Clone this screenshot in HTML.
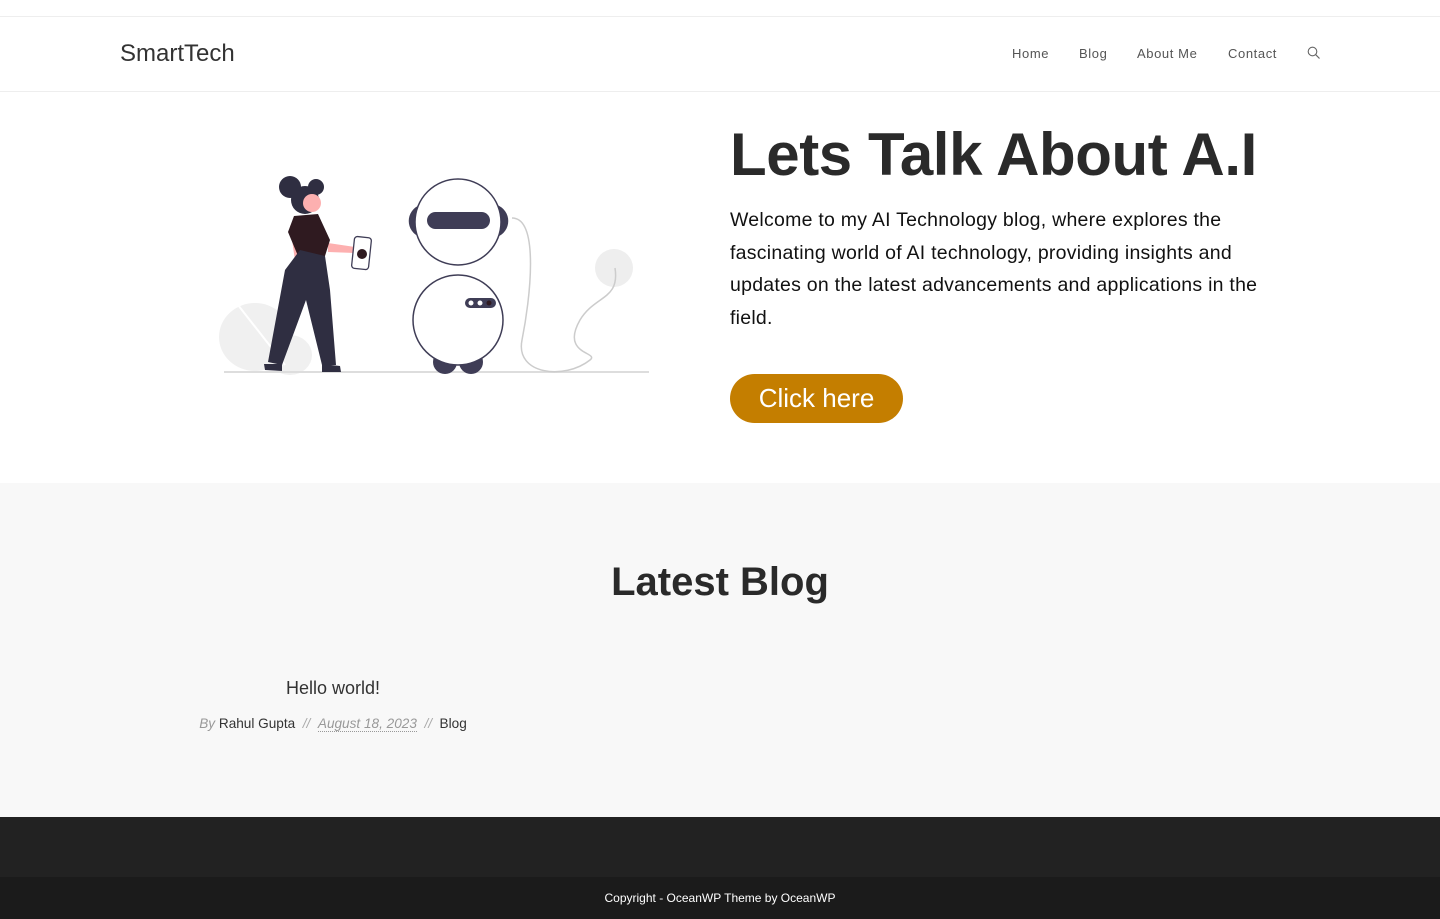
<!DOCTYPE html>
<html><head><meta charset="utf-8"><style>
*{margin:0;padding:0;box-sizing:border-box}
body{width:1440px;height:919px;overflow:hidden;background:#fff;font-family:"Liberation Sans",sans-serif;color:#333;position:relative}
.topbar{position:absolute;top:0;left:0;width:1440px;height:17px;border-bottom:1px solid #eee}
.hdr{position:absolute;top:17px;left:0;width:1440px;height:75px;border-bottom:1px solid #eee}
.logo{position:absolute;left:120px;top:23px;font-size:24px;color:#333}
.nav{position:absolute;top:29px;font-size:13px;letter-spacing:.6px;color:#555}
h1{position:absolute;left:730px;top:120px;font-size:60px;font-weight:bold;color:#2a2a2a;letter-spacing:-0.4px;white-space:nowrap}
.intro{position:absolute;left:730px;top:204px;white-space:nowrap;font-size:19.5px;letter-spacing:.25px;line-height:32.5px;color:#111}
.btn{position:absolute;left:730px;top:374px;width:173px;height:49px;border-radius:25px;background:#c47e00;color:#fff;font-size:26px;text-align:center;line-height:49px}
.sec{position:absolute;top:483px;left:0;width:1440px;height:334px;background:#f8f8f8}
h2{position:absolute;top:560px;left:0;width:1440px;text-align:center;font-size:40px;font-weight:bold;color:#2a2a2a}
.post{position:absolute;left:186px;width:294px;text-align:center}
.foot1{position:absolute;top:817px;left:0;width:1440px;height:60px;background:#222}
.foot2{position:absolute;top:877px;left:0;width:1440px;height:42px;background:#1b1b1b;color:#fff;font-size:12px;text-align:center;line-height:42px}
</style></head><body>
<div class="topbar"></div>
<div class="hdr">
<div class="logo">SmartTech</div>
<div class="nav" style="left:1012px">Home</div>
<div class="nav" style="left:1079px">Blog</div>
<div class="nav" style="left:1137px">About Me</div>
<div class="nav" style="left:1228px">Contact</div>
<svg style="position:absolute;left:1307px;top:29px" width="14" height="14" viewBox="0 0 14 14"><circle cx="5.5" cy="5.5" r="4.3" fill="none" stroke="#666" stroke-width="1.1"/><path d="M8.6 8.6L12.5 12.5" stroke="#666" stroke-width="1.2"/></svg>
</div>
<svg style="position:absolute;left:0;top:0" width="700" height="400" viewBox="0 0 700 400">
<ellipse cx="255" cy="337" rx="36" ry="34" fill="#f0f0f0"/>
<ellipse cx="290" cy="355" rx="22" ry="20" fill="#f0f0f0"/>
<path d="M238 305 L285 365" stroke="#fff" stroke-width="2"/>
<line x1="224" y1="372" x2="649" y2="372" stroke="#ddd" stroke-width="2"/>
<circle cx="614" cy="268" r="19" fill="#eee"/>
<path d="M512 218 C540 218 530 300 522 340 C515 375 565 380 590 360 C600 352 560 355 580 320 C595 295 620 300 615 268" fill="none" stroke="#ccc" stroke-width="1.5"/>
<path d="M420 205 A17 17 0 0 0 420 237Z M497 205 A17 17 0 0 1 497 237Z" fill="#3f3d56"/>
<circle cx="458" cy="222" r="43" fill="#fff" stroke="#3f3d56" stroke-width="1.5"/>
<rect x="427" y="212" width="63" height="17" rx="8.5" fill="#3f3d56"/>
<circle cx="445" cy="362" r="12" fill="#3f3d56"/><circle cx="471" cy="362" r="12" fill="#3f3d56"/>
<circle cx="458" cy="320" r="45" fill="#fff" stroke="#3f3d56" stroke-width="1.5"/>
<rect x="465" y="298" width="31" height="10" rx="5" fill="#3f3d56"/>
<circle cx="471" cy="303" r="2.5" fill="#fff"/><circle cx="480" cy="303" r="2.5" fill="#fff"/><circle cx="489" cy="303" r="2.5" fill="#2f1a20"/>
<circle cx="290" cy="187" r="11" fill="#2f2e41"/><circle cx="316" cy="187" r="8" fill="#2f2e41"/>
<circle cx="305" cy="200" r="14" fill="#2f2e41"/>
<circle cx="312" cy="203" r="9" fill="#fdb0b0"/>
<path d="M328 243 L355 247 L355 253 L328 252Z" fill="#fdb0b0"/>
<path d="M290 225 L296 268 L302 272 L300 250Z" fill="#fdb0b0"/>
<path d="M294 216 L318 214 L330 240 L325 256 L298 256 L288 232Z" fill="#2f1a20"/>
<path d="M300 250 L325 256 L330 290 L336 365 L322 365 L306 300 L282 365 L268 362 L285 270Z" fill="#2f2e41"/>
<path d="M264 364 L282 364 L282 371 L265 370Z M322 364 L340 366 L341 372 L322 372Z" fill="#2f2e41"/>
<rect x="353" y="237" width="17" height="32" rx="3" fill="#fff" stroke="#3f3d56" stroke-width="1.3" transform="rotate(6 361 253)"/>
<circle cx="362" cy="254" r="5" fill="#2f1a20"/>
</svg>
<h1>Lets Talk About A.I</h1>
<div class="intro">Welcome to my AI Technology blog, where explores the<br>fascinating world of AI technology, providing insights and<br>updates on the latest advancements and applications in the<br>field.</div>
<div class="btn">Click here</div>
<div class="sec"></div>
<h2>Latest Blog</h2>
<div class="post" style="top:678px;font-size:18px;color:#333">Hello world!</div>
<div class="post" style="top:716px;font-size:13.6px;color:#333"><i style="color:#999">By</i> Rahul Gupta <i style="color:#aaa">&nbsp;//&nbsp;</i> <i style="color:#999;border-bottom:1px dotted #999">August 18, 2023</i> <i style="color:#aaa">&nbsp;//&nbsp;</i> Blog</div>
<div class="foot1"></div>
<div class="foot2">Copyright - OceanWP Theme by OceanWP</div>
</body></html>
